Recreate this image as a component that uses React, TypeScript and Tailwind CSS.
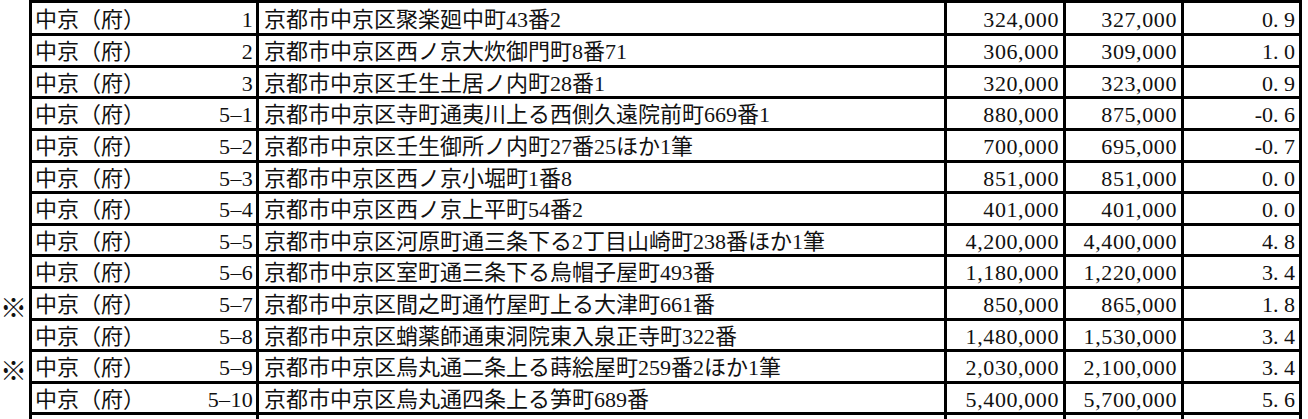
import React from "react";

type Row = {
  m: string;
  n: string;
  a: string;
  p1: string;
  p2: string;
  r: string;
  h: string;
};

const rows: Row[] = [
  { m: "", n: "1", a: "京都市中京区聚楽廻中町43番2", p1: "324,000", p2: "327,000", r: "0. 9", h: "h-[33px]" },
  { m: "", n: "2", a: "京都市中京区西ノ京大炊御門町8番71", p1: "306,000", p2: "309,000", r: "1. 0", h: "h-[32px]" },
  { m: "", n: "3", a: "京都市中京区壬生土居ノ内町28番1", p1: "320,000", p2: "323,000", r: "0. 9", h: "h-[31px]" },
  { m: "", n: "5–1", a: "京都市中京区寺町通夷川上る西側久遠院前町669番1", p1: "880,000", p2: "875,000", r: "-0. 6", h: "h-[32px]" },
  { m: "", n: "5–2", a: "京都市中京区壬生御所ノ内町27番25ほか1筆", p1: "700,000", p2: "695,000", r: "-0. 7", h: "h-[32px]" },
  { m: "", n: "5–3", a: "京都市中京区西ノ京小堀町1番8", p1: "851,000", p2: "851,000", r: "0. 0", h: "h-[31px]" },
  { m: "", n: "5–4", a: "京都市中京区西ノ京上平町54番2", p1: "401,000", p2: "401,000", r: "0. 0", h: "h-[32px]" },
  { m: "", n: "5–5", a: "京都市中京区河原町通三条下る2丁目山崎町238番ほか1筆", p1: "4,200,000", p2: "4,400,000", r: "4. 8", h: "h-[31px]" },
  { m: "", n: "5–6", a: "京都市中京区室町通三条下る烏帽子屋町493番", p1: "1,180,000", p2: "1,220,000", r: "3. 4", h: "h-[32px]" },
  { m: "※", n: "5–7", a: "京都市中京区間之町通竹屋町上る大津町661番", p1: "850,000", p2: "865,000", r: "1. 8", h: "h-[32px]" },
  { m: "", n: "5–8", a: "京都市中京区蛸薬師通東洞院東入泉正寺町322番", p1: "1,480,000", p2: "1,530,000", r: "3. 4", h: "h-[31px]" },
  { m: "※", n: "5–9", a: "京都市中京区烏丸通二条上る蒔絵屋町259番2ほか1筆", p1: "2,030,000", p2: "2,100,000", r: "3. 4", h: "h-[32px]" },
  { m: "", n: "5–10", a: "京都市中京区烏丸通四条上る笋町689番", p1: "5,400,000", p2: "5,700,000", r: "5. 6", h: "h-[31px]" },
];

function DataRow({ row }: { row: Row }) {
  return (
    <div className={`flex ${row.h}`}>
      <div className="w-[27px] flex items-center justify-center pt-[3px] text-[27px] font-medium font-['Noto_Sans_CJK_JP',sans-serif]">
        {row.m}
      </div>
      <div className="w-[2px]" />
      <div className="flex border-b-[3px] border-black">
        <div className="w-[227px] border-l-[3px] border-black flex items-center justify-between pl-[3px] pr-[3px] pt-[3px]">
          <span>中京（府）</span>
          <span className="tracking-[0.3px]">{row.n}</span>
        </div>
        <div className="w-[688px] border-l-[3px] border-black flex items-center pl-[5px] pt-[3px] whitespace-nowrap overflow-hidden">
          {row.a}
        </div>
        <div className="w-[119px] border-l-[3px] border-black flex items-center justify-end pr-[4px] pt-[3px] tracking-[0.6px]">
          {row.p1}
        </div>
        <div className="w-[118px] border-l-[3px] border-black flex items-center justify-end pr-[4px] pt-[3px] tracking-[0.6px]">
          {row.p2}
        </div>
        <div className="w-[121px] border-l-[3px] border-r-[3px] border-black flex items-center justify-end pr-[4px] pt-[3px] whitespace-pre">
          {row.r}
        </div>
      </div>
    </div>
  );
}

export default function App() {
  return (
    <div className="w-[1308px] h-[419px] overflow-hidden bg-white text-[#111] text-[22px] leading-none font-['Liberation_Serif','Noto_Sans_CJK_JP',serif]">
      <div className="flex">
        <div className="w-[29px]" />
        <div className="w-[1273px] h-[3px] bg-black" />
      </div>
      {rows.map((row, i) => (
        <DataRow key={i} row={row} />
      ))}
      <div className="flex h-[40px]">
        <div className="w-[29px]" />
        <div className="flex">
          <div className="w-[227px] border-l-[3px] border-black" />
          <div className="w-[688px] border-l-[3px] border-black" />
          <div className="w-[119px] border-l-[3px] border-black" />
          <div className="w-[118px] border-l-[3px] border-black" />
          <div className="w-[121px] border-l-[3px] border-r-[3px] border-black" />
        </div>
      </div>
    </div>
  );
}
